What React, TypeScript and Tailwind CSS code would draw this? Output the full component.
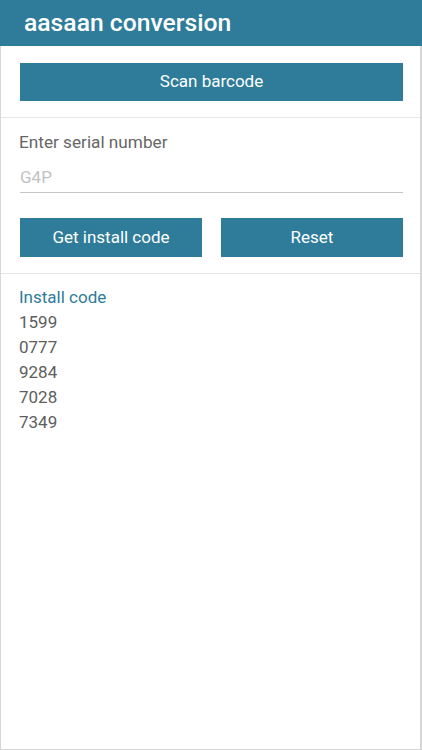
import { useState } from 'react';

const codes = ['1599', '0777', '9284', '7028', '7349'];

export default function App() {
  const [serial, setSerial] = useState('');

  return (
    <div
      className="flex h-[750px] w-full flex-col border-b border-l border-r-2 border-[#d6d6d6] bg-white"
      style={{ fontFamily: 'Roboto, "Noto Sans", sans-serif' }}
    >
      {/* Title bar */}
      <header className="-ml-px -mr-[2px] flex h-[46px] shrink-0 items-center bg-[#2e7c99] pl-[24px] pt-[1px]">
        <h1 className="text-[24.7px] font-medium leading-none text-white">aasaan conversion</h1>
      </header>

      {/* Scan */}
      <div className="border-b border-[#e6e6e6] pb-[16px] pl-[19px] pr-[17px] pt-[17px]">
        <button className="flex h-[38px] w-full items-center justify-center bg-[#2e7c99] text-[17px] text-white">
          Scan barcode
        </button>
      </div>

      {/* Serial input */}
      <div className="border-b border-[#e6e6e6] pb-[16px] pl-[19px] pr-[17px] pt-[14px]">
        <label className="-ml-px block text-[17.2px] leading-[21px] text-[#666666]">
          Enter serial number
        </label>
        <input
          value={serial}
          onChange={(e) => setSerial(e.target.value)}
          placeholder="G4P"
          className="mt-[15px] block h-[25px] w-full border-b border-[#c4c4c4] bg-transparent pb-[4px] text-[17px] text-[#555555] outline-none placeholder:text-[#c2c2c2]"
        />
        <div className="mt-[25px] grid grid-cols-2 gap-[19px]">
          <button className="flex h-[39px] items-center justify-center bg-[#2e7c99] text-[17px] text-white">
            Get install code
          </button>
          <button className="flex h-[39px] items-center justify-center bg-[#2e7c99] text-[17px] text-white">
            Reset
          </button>
        </div>
      </div>

      {/* Result */}
      <div className="pl-[19px] pt-[13px]">
        <div className="-ml-px text-[17px] leading-[20px] text-[#2e7c99]">Install code</div>
        <div className="-ml-px mt-[3px] flex flex-col">
          {codes.map((c) => (
            <div key={c} className="text-[17px] leading-[25px] text-[#5e5e5e]">
              {c}
            </div>
          ))}
        </div>
      </div>
    </div>
  );
}
